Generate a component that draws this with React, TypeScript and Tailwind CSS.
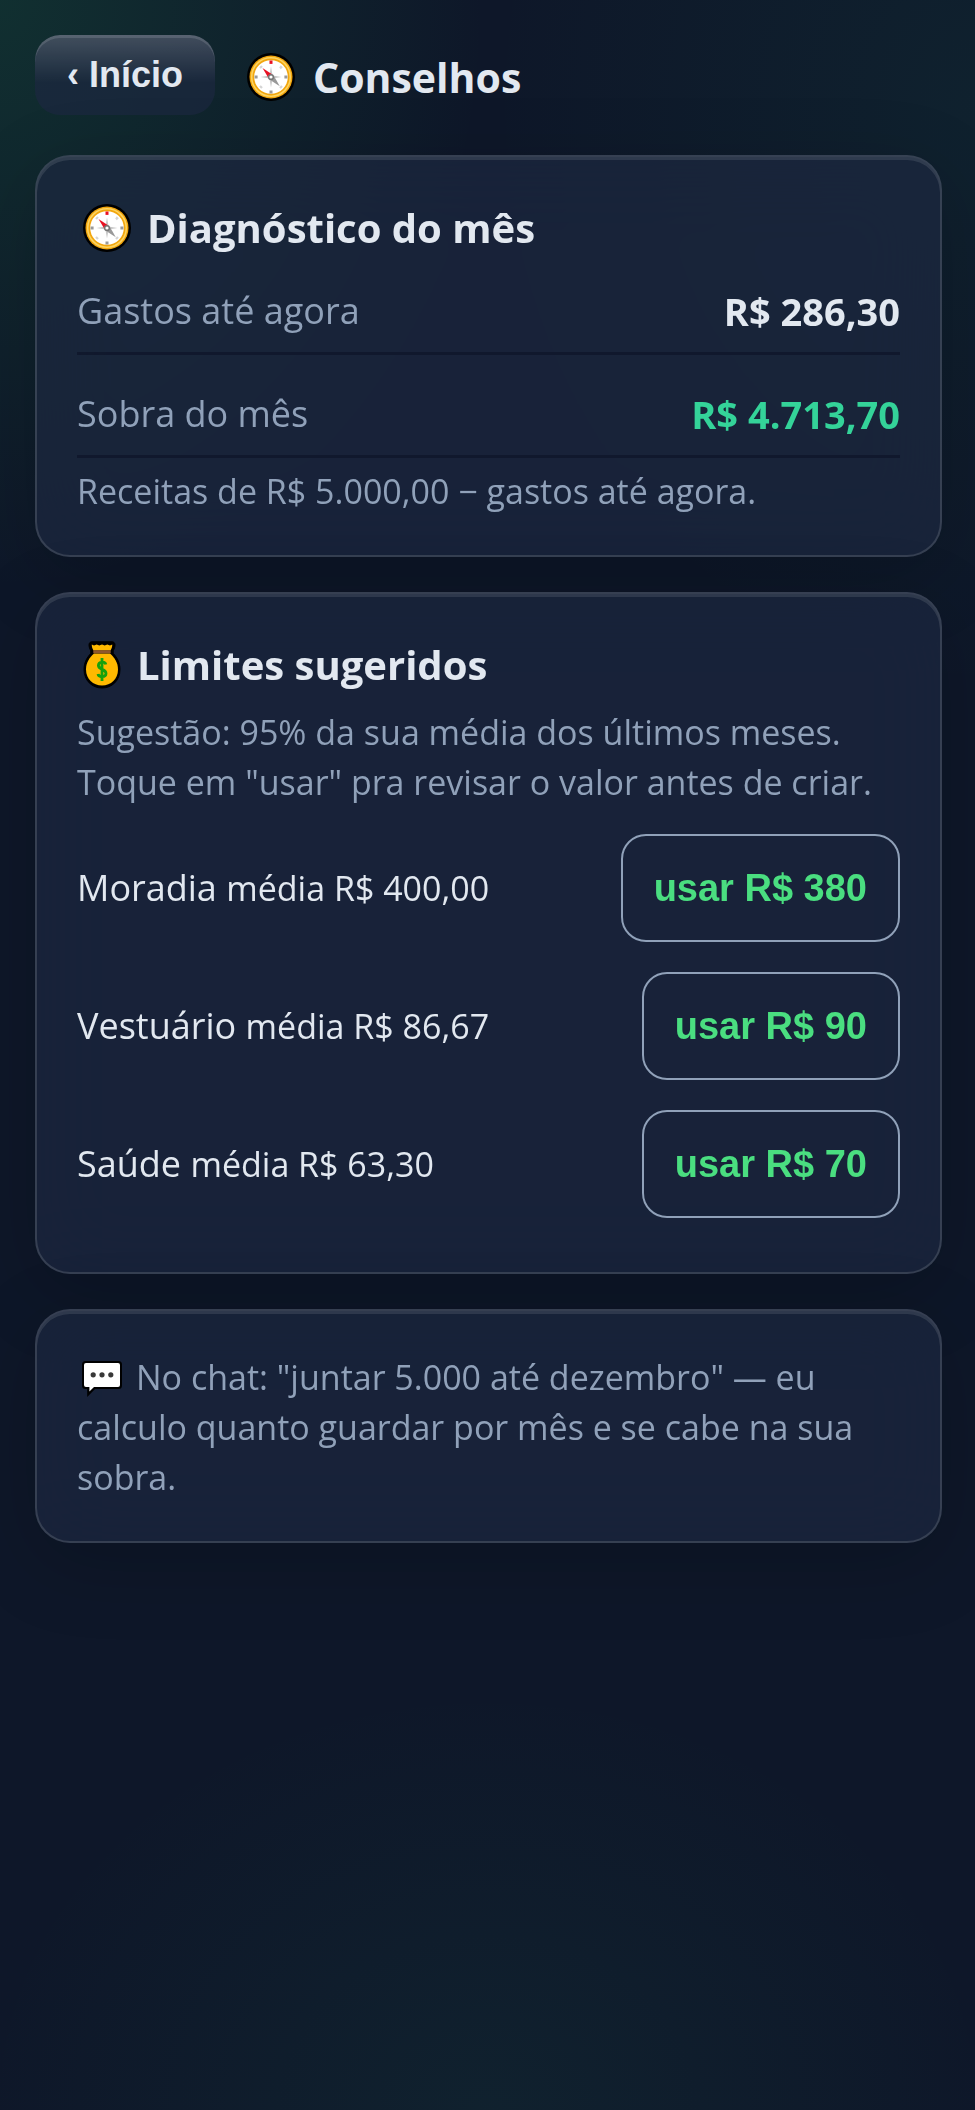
import type { ReactNode } from 'react';

type Suggestion = {
  category: string;
  average: string;
  limit: string;
};

const SUGGESTIONS: Suggestion[] = [
  { category: 'Moradia', average: 'R$ 400,00', limit: 'R$ 380' },
  { category: 'Vestuário', average: 'R$ 86,67', limit: 'R$ 90' },
  { category: 'Saúde', average: 'R$ 63,30', limit: 'R$ 70' },
];

function CompassIcon() {
  return (
    <svg viewBox="0 0 48 48" className="size-12 shrink-0" aria-hidden="true">
      <circle cx="24" cy="24" r="24" fill="#000" />
      <circle cx="24" cy="24" r="21.5" fill="#f2a60d" />
      <circle cx="24" cy="24" r="19.3" fill="none" stroke="#fcd462" strokeWidth="1.6" />
      <circle cx="24" cy="24" r="16.8" fill="#fff" />
      <path d="M22.5 7.5h3v3.4h-3z" fill="#e81123" />
      <path d="M22.5 37.4h3v3.2h-3zM7.6 22.5h3v3h-3zM37.4 22.5h3v3h-3z" fill="#999" />
      <path d="m12.2 14.2 2-2 1.6 1.6-2 2zM33.8 12.2l2 2-2 2-1.6-1.6zM12.2 33.8l2 2 1.6-1.6-2-2zM33.8 35.8l2-2-1.6-1.6-2 2z" fill="#d5d5d5" />
      <path d="m24 13.5 1.6 8.9 8.9 1.6-8.9 1.6L24 34.5l-1.6-8.9-8.9-1.6 8.9-1.6z" fill="#c8c8c8" />
      <path d="m15.5 15 9.9 6.4-3.8 3.8z" fill="#e81123" />
      <path d="m32.8 33.2-10-6.4 4-4z" fill="#999" />
      <circle cx="24" cy="24" r="3.1" fill="#767676" />
      <circle cx="24" cy="24" r="1.6" fill="#fff" />
    </svg>
  );
}

function MoneyBagIcon() {
  return (
    <svg viewBox="0 0 38 48" className="h-12 w-[38px] shrink-0" aria-hidden="true">
      <path
        d="M9 .8h20c3.500 0 4 4 1.200 9v2.500C33.500 16 37 21 37 28.500 37 39.500 29 47 19 47S1 39.500 1 28.500C1 21 4.500 16 7.800 12.300V9.800C5 4.800 5.500.8 9 .8z"
        fill="#000"
        stroke="#000"
        strokeLinejoin="round"
      />
      <path d="M11 12.500h16C31.500 16.500 35 21.500 35 28.500 35 38 28 44.500 19 44.500S3 38 3 28.500C3 21.500 6.500 16.500 11 12.500z" fill="#ffb900" />
      <path d="M8.800 3.600 11 4.400l2.700-.9 2.600.9L19 3.500l2.700.9 2.600-.9 2.700.9 2.200-.8c.3 2.200-.6 3.900-1.700 5.900h-17C9.400 7.500 8.500 5.800 8.800 3.600z" fill="#ffb900" />
      <path d="M10.300 9.300h17.400v2.900H10.300z" fill="#8e562e" />
      <path d="M19 17v23M22.800 23.500c-.6-3.600-7.400-3.200-7.400 1 0 4.600 7.600 3.200 7.600 8 0 4.200-7.400 4.200-8 .6" fill="none" stroke="#16a10c" strokeWidth="2.8" />
    </svg>
  );
}

function ChatIcon() {
  return (
    <svg viewBox="0 0 40 36" className="mr-[14px] ml-[5px] inline-block h-9 w-10 align-[-7px]" aria-hidden="true">
      <path d="M3.500 0h33A3.500 3.500 0 0 1 40 3.500v21a3.500 3.500 0 0 1-3.500 3.500H13l-7.800 8v-8H3.500A3.500 3.500 0 0 1 0 24.500v-21A3.500 3.500 0 0 1 3.500 0z" fill="#000" />
      <path d="M4 2h32a2 2 0 0 1 2 2v20a2 2 0 0 1-2 2H12l-4.600 4.500V26H4a2 2 0 0 1-2-2V4a2 2 0 0 1 2-2z" fill="#fff" />
      <circle cx="11.200" cy="13.800" r="2.600" fill="#383838" />
      <circle cx="20" cy="13.800" r="2.600" fill="#383838" />
      <circle cx="28.800" cy="13.800" r="2.600" fill="#383838" />
    </svg>
  );
}

function Card({ children }: { children: ReactNode }) {
  return (
    <section className="rounded-[35px] border-2 border-white/13 bg-[#1c2840]/70 px-10 pt-[41px] pb-[39px] shadow-[inset_0_3px_0_rgba(255,255,255,0.1),0_20px_80px_rgba(0,0,0,0.18)] backdrop-blur-2xl">
      {children}
    </section>
  );
}

function CardTitle({ icon, children }: { icon: ReactNode; children: ReactNode }) {
  return (
    <h2 className="mb-3 flex items-center gap-4 pl-[6px] text-[40px] leading-[60px] font-bold">
      {icon}
      {children}
    </h2>
  );
}

function SummaryRow({ label, value, valueClass = '' }: { label: string; value: string; valueClass?: string }) {
  return (
    <div className="flex items-center justify-between border-b-[3px] border-[#0f172a]/80 py-4 leading-[50px]">
      <dt className="text-[36px] text-slate-400">{label}</dt>
      <dd className={`text-[38px] font-bold ${valueClass}`}>{value}</dd>
    </div>
  );
}

export default function App() {
  return (
    <div className="min-h-screen bg-[#0e1729] bg-[radial-gradient(ellipse_50%_28%_at_0%_0%,rgba(34,197,94,0.14),transparent),radial-gradient(ellipse_50%_28%_at_100%_5%,rgba(34,197,130,0.06),transparent),radial-gradient(ellipse_52%_20%_at_50%_100%,rgba(45,197,130,0.06),transparent)] py-[35px] pr-[33px] pl-[35px] font-['Open_Sans','Noto_Sans',sans-serif] text-[#e2e8f0]">
      <header className="mb-10 flex items-center gap-8">
        <button
          type="button"
          className="h-20 rounded-[25px] bg-[#1c2840]/70 bg-linear-to-b from-white/18 to-transparent to-60% px-8 font-['Liberation_Sans',sans-serif] text-[36px] leading-10 font-bold shadow-[inset_0_3px_0_rgba(255,255,255,0.12)]"
        >
          ‹ Início
        </button>
        <h1 className="flex items-center gap-[18px] pt-1 text-[41px] leading-[60px] font-bold">
          <CompassIcon />
          Conselhos
        </h1>
      </header>

      <main className="flex flex-col gap-[35px]">
        <Card>
          <CardTitle icon={<CompassIcon />}>Diagnóstico do mês</CardTitle>
          <dl className="flex flex-col gap-[18px]">
            <SummaryRow label="Gastos até agora" value="R$ 286,30" />
            <SummaryRow label="Sobra do mês" value="R$ 4.713,70" valueClass="text-[#34d399]" />
          </dl>
          <p className="mt-2 text-[34px] leading-[50px] text-slate-400">
            Receitas de R$ 5.000,00 − gastos até agora.
          </p>
        </Card>

        <Card>
          <CardTitle icon={<MoneyBagIcon />}>Limites sugeridos</CardTitle>
          <p className="mb-3 text-[34px] leading-[50px] text-slate-400">
            Sugestão: 95% da sua média dos últimos meses. Toque em "usar" pra revisar o valor antes de criar.
          </p>
          <ul>
            {SUGGESTIONS.map((s) => (
              <li key={s.category} className="flex items-center justify-between py-[15px] text-[36px] leading-[50px]">
                <span>
                  {s.category} <span className="text-[34px]">média {s.average}</span>
                </span>
                <button
                  type="button"
                  className="h-[108px] rounded-[25px] border-2 border-slate-400 px-[31px] font-['Liberation_Sans',sans-serif] text-[38px] font-bold text-[#4ade80]"
                >
                  usar {s.limit}
                </button>
              </li>
            ))}
          </ul>
        </Card>

        <Card>
          <p className="text-[34px] leading-[50px] text-slate-400">
            <ChatIcon />
            No chat: "juntar 5.000 até dezembro" — eu calculo quanto guardar por mês e se cabe na sua sobra.
          </p>
        </Card>
      </main>
    </div>
  );
}
